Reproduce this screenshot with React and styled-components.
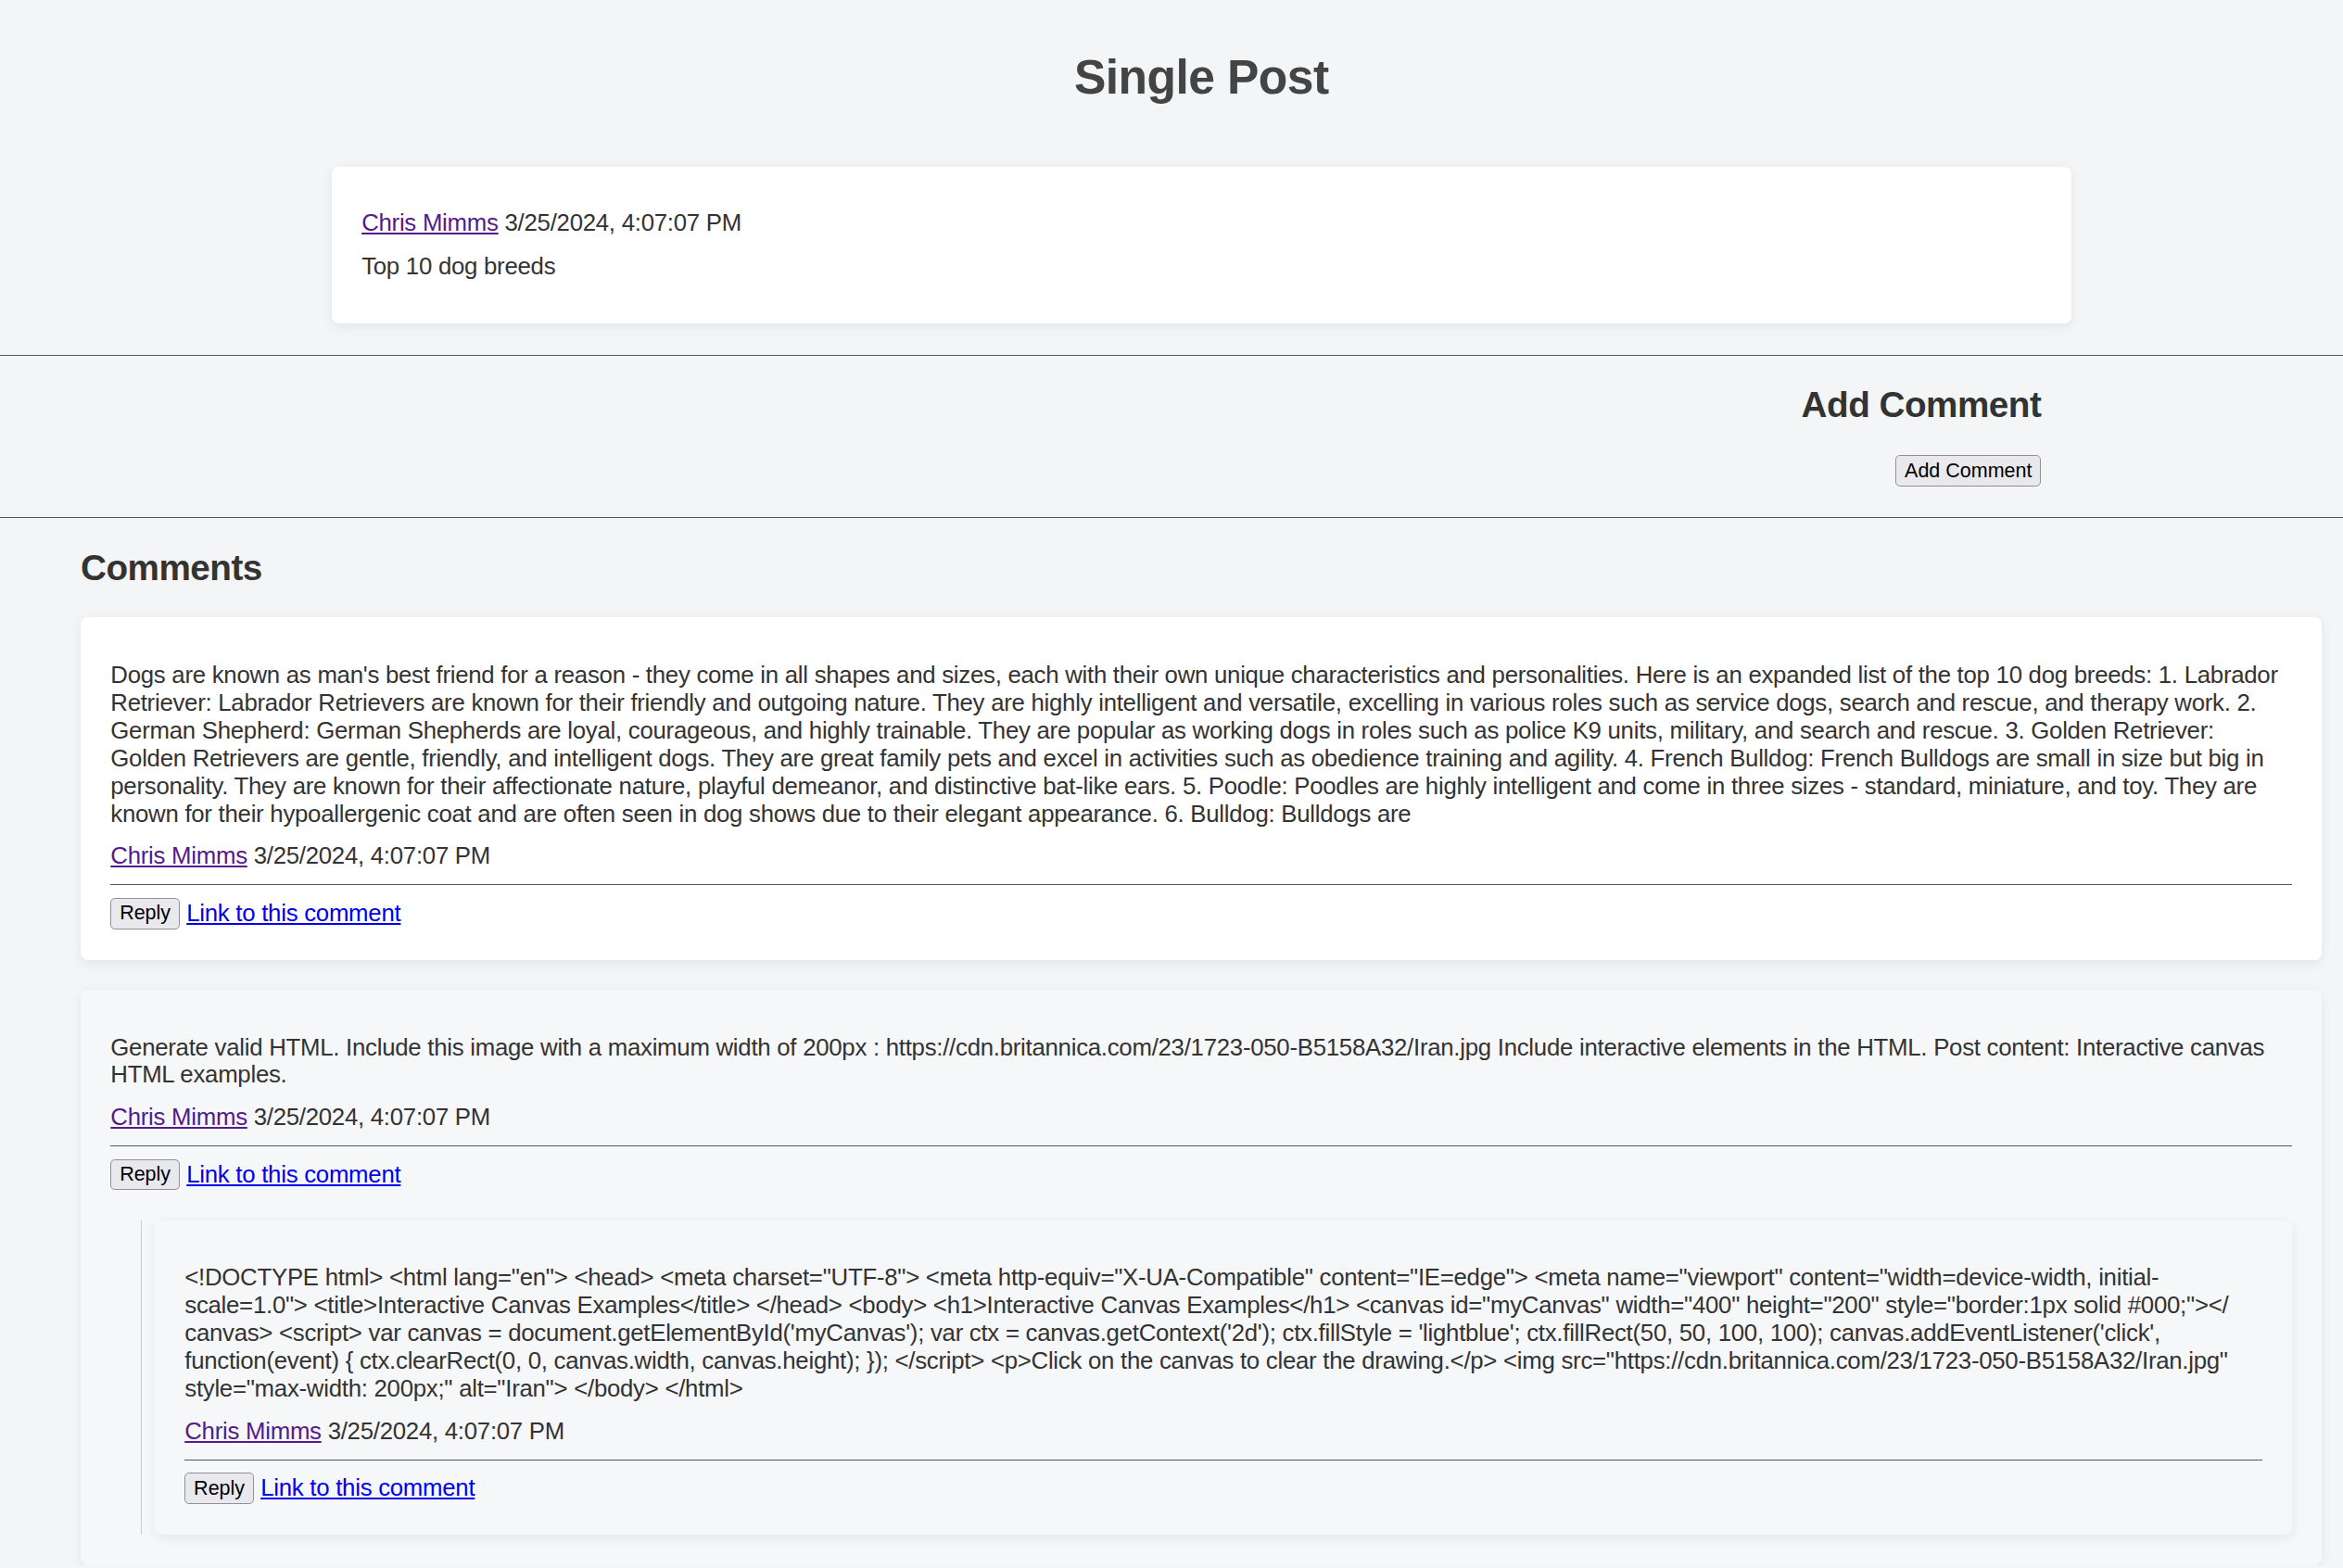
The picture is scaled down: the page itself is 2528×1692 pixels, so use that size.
import React from 'react';
import styled, { createGlobalStyle } from 'styled-components';

// the reference is drawn at a 1.6122 device scale, so css sizes are multiplied here
const S = 2528 / 1568;
const u = (n) => `${(n * S).toFixed(2)}px`;

const comments = [
  {
    id: 1,
    tone: 'white',
    body:
      "Dogs are known as man's best friend for a reason - they come in all shapes and sizes, each with their own unique characteristics and personalities. Here is an expanded list of the top 10 dog breeds: 1. Labrador Retriever: Labrador Retrievers are known for their friendly and outgoing nature. They are highly intelligent and versatile, excelling in various roles such as service dogs, search and rescue, and therapy work. 2. German Shepherd: German Shepherds are loyal, courageous, and highly trainable. They are popular as working dogs in roles such as police K9 units, military, and search and rescue. 3. Golden Retriever: Golden Retrievers are gentle, friendly, and intelligent dogs. They are great family pets and excel in activities such as obedience training and agility. 4. French Bulldog: French Bulldogs are small in size but big in personality. They are known for their affectionate nature, playful demeanor, and distinctive bat-like ears. 5. Poodle: Poodles are highly intelligent and come in three sizes - standard, miniature, and toy. They are known for their hypoallergenic coat and are often seen in dog shows due to their elegant appearance. 6. Bulldog: Bulldogs are",
    replies: [],
  },
  {
    id: 2,
    tone: 'gray',
    body:
      'Generate valid HTML. Include this image with a maximum width of 200px : https://cdn.britannica.com/23/1723-050-B5158A32/Iran.jpg Include interactive elements in the HTML. Post content: Interactive canvas HTML examples.',
    replies: [
      {
        id: 3,
        tone: 'gray',
        body:
          '<!DOCTYPE html> <html lang="en"> <head> <meta charset="UTF-8"> <meta http-equiv="X-UA-Compatible" content="IE=edge"> <meta name="viewport" content="width=device-width, initial-scale=1.0"> <title>Interactive Canvas Examples</title> </head> <body> <h1>Interactive Canvas Examples</h1> <canvas id="myCanvas" width="400" height="200" style="border:1px solid #000;"></\u200Bcanvas> <script> var canvas = document.getElementById(\'myCanvas\'); var ctx = canvas.getContext(\'2d\'); ctx.fillStyle = \'lightblue\'; ctx.fillRect(50, 50, 100, 100); canvas.addEventListener(\'click\', function(event) { ctx.clearRect(0, 0, canvas.width, canvas.height); }); </script> <p>Click on the canvas to clear the drawing.</p> <img src="https://cdn.britannica.com/23/1723-050-B5158A32/Iran.jpg" style="max-width: 200px;" alt="Iran"> </body> </html>',
        replies: [],
      },
    ],
  },
];

const DATE = '3/25/2024, 4:07:07 PM';

const App = () => {
  return (
    <>
      <GlobalStyle />
      <Header>
        <Title>Single Post</Title>
        <PostCard>
          <Meta>
            <AuthorLink href="#">Chris Mimms</AuthorLink> {DATE}
          </Meta>
          <PostBody>Top 10 dog breeds</PostBody>
        </PostCard>
      </Header>

      <AddCommentSection>
        <AddCommentInner>
          <SectionTitle>Add Comment</SectionTitle>
          <Button type="button">Add Comment</Button>
        </AddCommentInner>
      </AddCommentSection>

      <CommentsSection>
        <SectionTitle>Comments</SectionTitle>
        <CommentList>
          {comments.map((c) => (
            <Comment key={c.id} comment={c} />
          ))}
        </CommentList>
      </CommentsSection>
    </>
  );
};

export default App;

const Comment = ({ comment }) => {
  return (
    <CommentCard $tone={comment.tone}>
      <CommentBody>{comment.body}</CommentBody>
      <Meta $spaced>
        <AuthorLink href="#">Chris Mimms</AuthorLink> {DATE}
      </Meta>
      <Divider />
      <Actions>
        <Button type="button">Reply</Button>
        <PermaLink href="#">Link to this comment</PermaLink>
      </Actions>
      {comment.replies.length > 0 && (
        <Replies>
          {comment.replies.map((r) => (
            <Comment key={r.id} comment={r} />
          ))}
        </Replies>
      )}
    </CommentCard>
  );
};

const GlobalStyle = createGlobalStyle`
  html, body {
    margin: 0;
    padding: 0;
  }

  body {
    background: #f4f5f7;
    color: #333;
    font-family: 'Liberation Sans', Arial, sans-serif;
    font-size: ${u(16)};
    line-height: 1.16;
    letter-spacing: -0.0105em;
    overflow-x: hidden;
  }
`;

const Header = styled.header`
  padding: ${u(12)} 0 ${u(20.8)} ${u(40)};
`;

const Title = styled.h1`
  margin: ${u(21.44)} 0 ${u(41.44)};
  text-align: center;
  font-size: ${u(32)};
  line-height: 1.15;
  letter-spacing: -0.011em;
  font-weight: 700;
  color: #444;
`;

const PostCard = styled.article`
  max-width: ${u(1164)};
  margin: 0 auto;
  box-sizing: border-box;
  padding: ${u(28.6)} ${u(20)};
  background: #fff;
  border-radius: ${u(5)};
  box-shadow: 0 ${u(2)} ${u(8)} rgba(0, 0, 0, 0.07);
`;

const Meta = styled.div`
  margin-top: ${(p) => (p.$spaced ? u(9.8) : 0)};
`;

const PostBody = styled.p`
  margin: ${u(10.6)} 0 0;
`;

const AuthorLink = styled.a`
  color: #551a8b;
  text-decoration: underline;
`;

const PermaLink = styled.a`
  color: #0000ee;
  text-decoration: underline;
`;

const AddCommentSection = styled.section`
  border-top: ${u(1)} solid #555;
  border-bottom: ${u(1)} solid #555;
  padding-left: ${u(40)};
`;

const AddCommentInner = styled.div`
  max-width: ${u(1164)};
  margin: 0 auto;
  box-sizing: border-box;
  padding: 0 ${u(20)} ${u(20.6)};
  display: flex;
  flex-direction: column;
  align-items: flex-end;
`;

const SectionTitle = styled.h2`
  margin: ${u(19.5)} 0;
  font-size: ${u(24)};
  line-height: 1.15;
  letter-spacing: -0.013em;
  font-weight: 700;
  color: #333;
`;

const Button = styled.button`
  font-family: 'Liberation Sans', Arial, sans-serif;
  font-size: ${u(13.333)};
  line-height: 1.15;
  letter-spacing: normal;
  color: #000;
  background: #e9e9ed;
  border: ${u(1)} solid #8f8f9d;
  border-radius: ${u(3)};
  padding: ${u(2.2)} ${u(5.5)};
  cursor: pointer;
`;

const CommentsSection = styled.section`
  padding: 0 ${u(14)} 0 ${u(54)};
`;

const CommentList = styled.div`
  display: flex;
  flex-direction: column;
  gap: ${u(20)};
  max-width: ${u(1500)};
`;

const CommentCard = styled.div`
  padding: ${u(29.5)} ${u(20)} ${u(20.6)};
  background: ${(p) => (p.$tone === 'white' ? '#fff' : '#f6f7f9')};
  border-radius: ${u(5)};
  box-shadow: 0 ${u(2)} ${u(8)} rgba(0, 0, 0, 0.07);
`;

const CommentBody = styled.div``;

const Divider = styled.hr`
  margin: ${u(9.3)} 0 ${u(8.4)};
  border: 0;
  border-top: ${u(1)} solid #555;
`;

const Actions = styled.div`
  display: flex;
  align-items: center;
  gap: ${u(4.5)};
`;

const Replies = styled.div`
  margin: ${u(20)} 0 0 ${u(20)};
  padding-left: ${u(9)};
  border-left: ${u(1)} solid #ccc;
`;
